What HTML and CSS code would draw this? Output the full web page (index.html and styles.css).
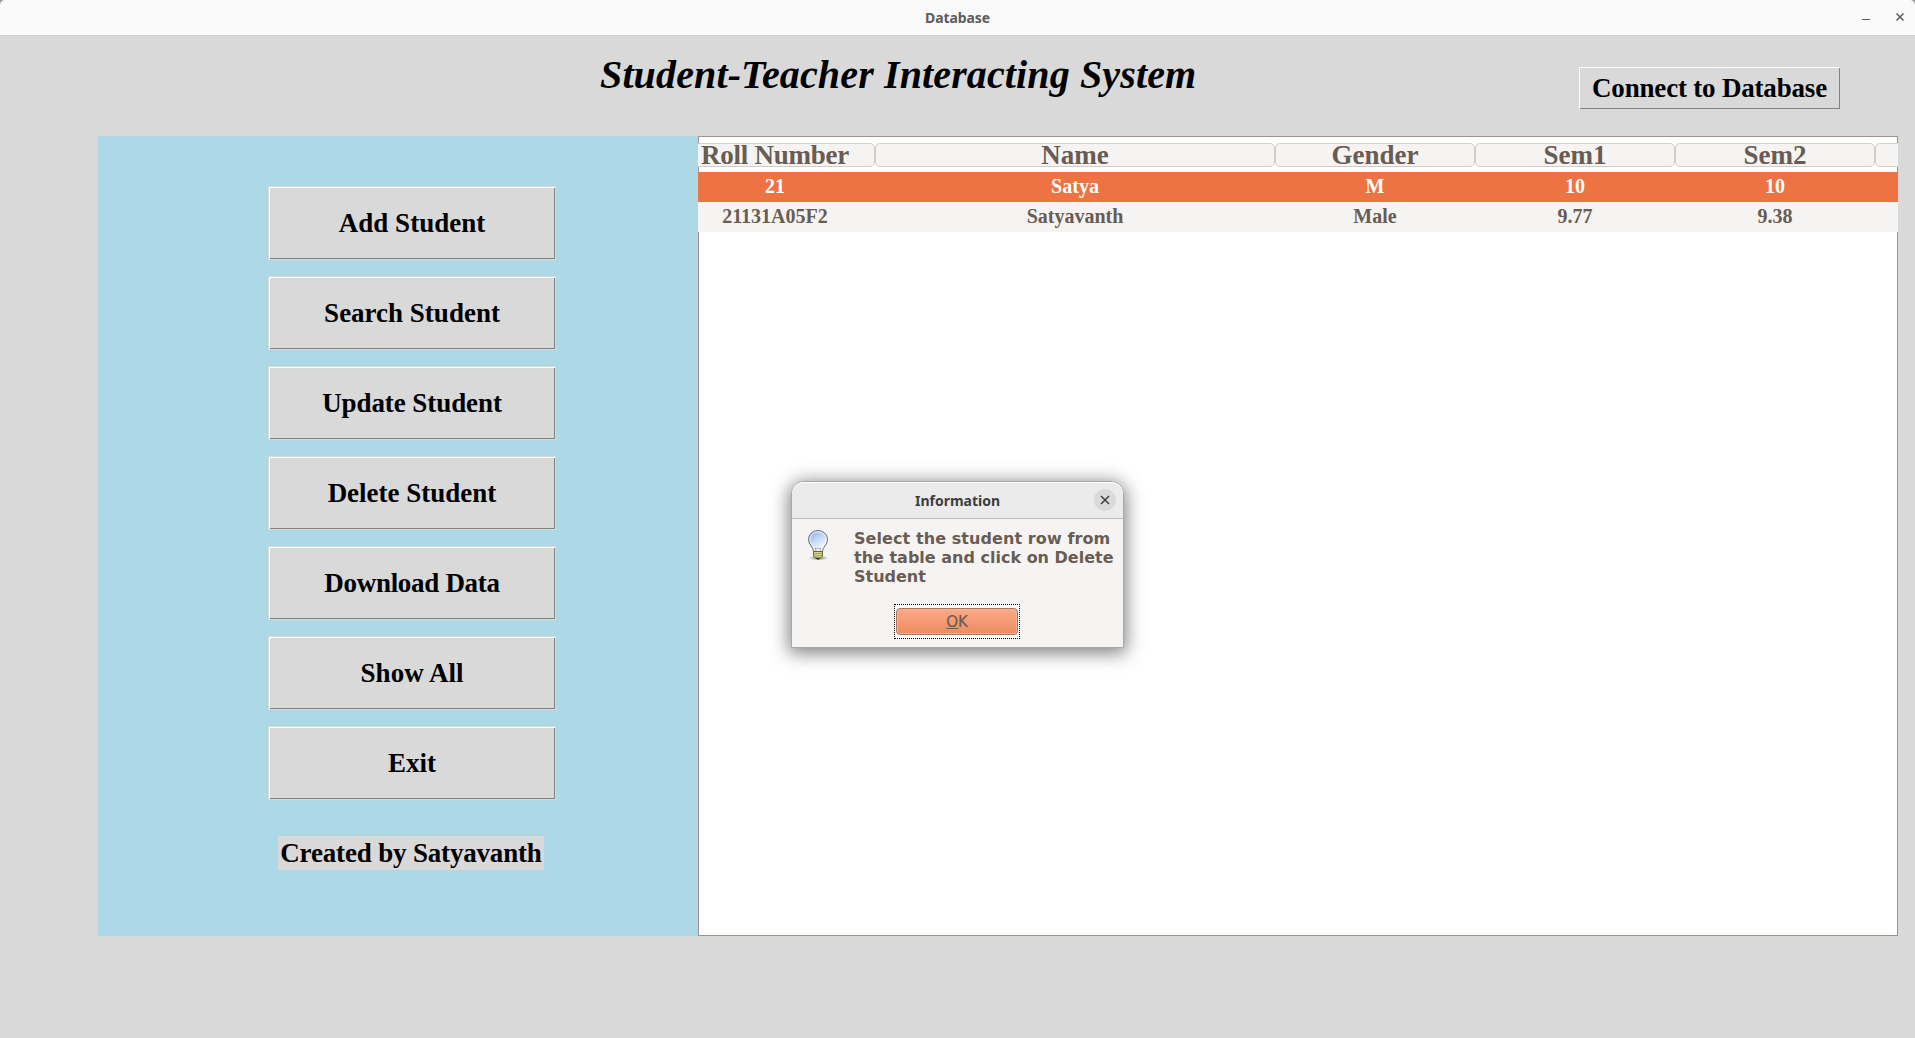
FILE: index.html
```html
<!DOCTYPE html>
<html lang="en">
<head>
<meta charset="utf-8">
<title>Database</title>
<link rel="stylesheet" href="styles.css">
</head>
<body>
<header class="titlebar">
  <span class="window-title">Database</span>
  <div class="window-controls">
    <svg width="8" height="10" viewBox="0 0 8 10"><path d="M0 7.5h8" stroke="#5c5c5c"/></svg>
    <svg width="8" height="8" viewBox="0 0 8 8"><path d="M.5 .5l7 7M7.500 .5l-7 7" stroke="#5c5c5c" stroke-width="1.5"/></svg>
  </div>
</header>
<div class="heading">
  <h1>Student-Teacher Interacting System</h1>
  <button class="btn connect">Connect to Database</button>
</div>
<main class="content">
  <nav class="sidebar">
    <button class="btn">Add Student</button>
    <button class="btn">Search Student</button>
    <button class="btn update">Update Student</button>
    <button class="btn">Delete Student</button>
    <button class="btn download">Download Data</button>
    <button class="btn">Show All</button>
    <button class="btn">Exit</button>
    <div class="credit">Created by Satyavanth</div>
  </nav>
  <section class="tree">
    <div class="row head">
      <span class="roll">Roll Number</span><span>Name</span><span>Gender</span><span>Sem1</span><span>Sem2</span><span></span>
    </div>
    <div class="row selected">
      <span>21</span><span>Satya</span><span>M</span><span>10</span><span>10</span><span></span>
    </div>
    <div class="row alt">
      <span>21131A05F2</span><span>Satyavanth</span><span>Male</span><span>9.77</span><span>9.38</span><span></span>
    </div>
  </section>
</main>
<div class="dialog">
  <div class="dialog-title">
    <span>Information</span>
    <div class="dialog-close"><svg width="10" height="10" viewBox="0 0 10 10"><path d="M1 1l8 8M9 1l-8 8" stroke="#3d3d3d" stroke-width="1.5"/></svg></div>
  </div>
  <div class="dialog-body">
    <svg class="bulb" width="22" height="32" viewBox="0 0 22 32">
      <defs>
        <linearGradient id="glass" x1="0" y1="0" x2="0.6" y2="1"><stop offset="0" stop-color="#7fa9e2"/><stop offset=".5" stop-color="#c3d7f1"/><stop offset="1" stop-color="#fbfcfe"/></linearGradient>
        <radialGradient id="shade"><stop offset="0" stop-color="#000" stop-opacity=".5"/><stop offset="1" stop-color="#000" stop-opacity="0"/></radialGradient>
      </defs>
      <ellipse cx="11.500" cy="28" rx="10" ry="2.500" fill="url(#shade)"/>
      <path d="M6.500 21.500C6.500 17 1.500 15 1.500 9.500a9.500 9 0 0 1 19 0C20.500 15 15.500 17 15.500 21.500z" fill="url(#glass)" stroke="#626b80"/>
      <path d="M7.500 20C7.500 16 2.800 14 2.800 9.500a8.200 7.700 0 0 1 16.400 0C19.200 14 14.500 16 14.500 20" fill="none" stroke="#fff" stroke-opacity=".75"/>
      <path d="M9 21l-1-3 2 1 1-1 1 1 2-1-1 3" fill="none" stroke="#999" stroke-width=".7"/>
      <path d="M6.500 21.500h9v4.500l-2 2h-5l-2-2z" fill="#d9db86" stroke="#5b5d2c" stroke-width=".9"/>
      <path d="M7 24l8-.8M7 26.300l8-.8" stroke="#7d7f40" stroke-width=".7"/>
      <path d="M8.500 28h5l-1.500 1.500h-2z" fill="#333"/>
    </svg>
    <p><span class="line-first">Select the student row from</span><br>the table and click on Delete<br>Student</p>
  </div>
  <div class="dialog-actions"><div class="focus"><button class="ok"><u>O</u>K</button></div></div>
</div>
</body>
</html>
```
FILE: styles.css
```css
* { box-sizing: border-box; }
body { margin: 0; width: 1915px; height: 1038px; overflow: hidden; background: #d9d9d9; color: #000; font-family: "Liberation Serif", serif; }
button { margin: 0; padding: 0; font: inherit; color: inherit; }
.titlebar { height: 36px; background: #fafafa; border-bottom: 1px solid #cfcfcf; border-radius: 5px 5px 0 0; display: grid; place-items: center; position: relative; box-shadow: 0 0 0 3px #999; clip-path: inset(0); }
.window-title { font: bold 14px/35px "Noto Sans", sans-serif; color: #5c5c5c; letter-spacing: -.1px; }
.window-controls { position: absolute; right: 11px; top: 12px; display: flex; gap: 26px; align-items: center; }
.heading { height: 100px; display: flex; padding-left: 600px; }
h1 { margin: 16px 0 0; width: 979px; font: italic bold 40px/46px "Liberation Serif", serif; letter-spacing: .13px; white-space: nowrap; }
.btn { font-weight: bold; font-size: 27px; background: #d9d9d9; border: 1px solid #d9d9d9; border-radius: 0; box-shadow: inset 1px 1px #fff, inset -1px -1px #828282; white-space: nowrap; }
.connect { margin: 30px 0 0 -1px; width: 263px; height: 44px; letter-spacing: -.19px; }
.content { display: flex; height: 800px; padding-left: 98px; }
.sidebar { width: 600px; background: #add8e6; padding: 50px 0 0 170px; display: flex; flex-direction: column; gap: 16px; }
.sidebar .btn { width: 288px; height: 74px; }
.sidebar .update { letter-spacing: -.08px; }
.sidebar .download { letter-spacing: -.3px; }
.credit { margin: 20px 0 0 10px; width: 266px; height: 34px; background: #d9d9d9; font: bold 27px/34px "Liberation Serif", serif; letter-spacing: -.17px; text-align: center; white-space: nowrap; }
.tree { width: 1200px; background: #fff; box-shadow: inset 0 0 0 1px #9e9389; padding-top: 7px; overflow: hidden; }
.row { display: grid; grid-template-columns: 200px 400px 200px 200px 200px 200px; width: 1400px; margin-left: -23px; height: 30px; font: bold 20px/29px "Liberation Serif", serif; text-align: center; color: #685c53; background: #f5f4f2; }
.head { height: 29px; padding-bottom: 5px; background: none; font-size: 27px; line-height: 22px; }
.head span { height: 24px; border: 1px solid #d3ccc5; border-radius: 5px; background: #f5f4f2; }
.head .roll { letter-spacing: -.25px; }
.selected { background: #ed7442; color: #fff; }
.dialog { position: absolute; left: 791px; top: 481px; width: 333px; height: 167px; background: #f5f4f2; border: 1px solid #a8a8a8; border-radius: 13px 13px 0 0; box-shadow: 0 3px 18px 2px rgba(0,0,0,.5); }
.dialog-title { height: 37px; background: #ebebeb; border-bottom: 1px solid #bfbfbf; border-radius: 12px 12px 0 0; box-shadow: inset 0 1px #fff; display: grid; place-items: center; position: relative; font: bold 14px/37px "Noto Sans", sans-serif; color: #3d3d3d; }
.dialog-close { position: absolute; right: 7px; top: 7px; width: 22px; height: 22px; border-radius: 50%; background: #dadada; display: grid; place-items: center; }
.dialog-body { display: flex; height: 85px; padding: 10px 0 0 15px; }
.bulb { margin-top: 1px; }
.dialog-body p { margin: 0 0 0 25px; font: bold 16px/19px "DejaVu Sans", sans-serif; color: #685c53; white-space: nowrap; }
.line-first { letter-spacing: .08px; }
.dialog-actions { display: flex; padding-left: 102px; }
.focus { width: 126px; height: 35px; border: 1px dotted #000; padding: 3px 1px; background: #fff; }
.ok { display: block; width: 122px; height: 27px; border: 1px solid #a9745c; border-radius: 4px; background: linear-gradient(#fbaa88, #ee8a60); box-shadow: inset 0 0 0 1px #f9b596; font: 15px/24px "DejaVu Sans", sans-serif; -webkit-text-stroke: .2px; color: #685c53; }
```
